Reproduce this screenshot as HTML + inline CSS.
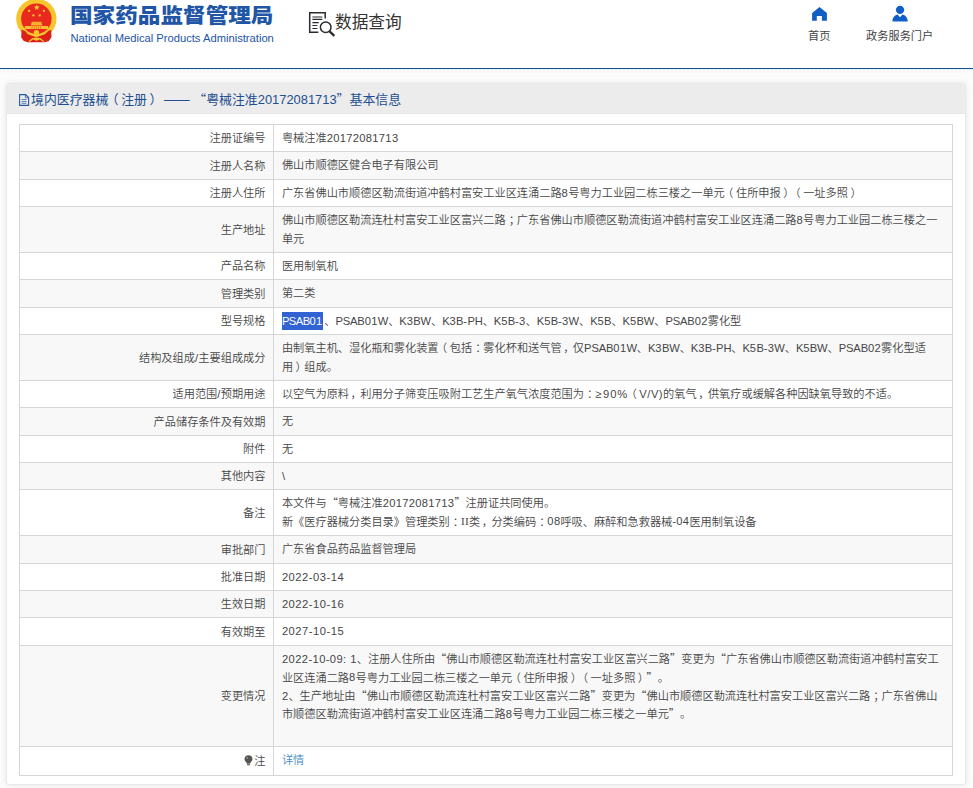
<!DOCTYPE html>
<html lang="zh-CN">
<head>
<meta charset="utf-8">
<title>数据查询</title>
<style>
*{box-sizing:border-box;}
html,body{margin:0;padding:0;}
body{width:973px;height:788px;overflow:hidden;background:#fcfcfc;font-family:"Liberation Sans","Noto Sans CJK SC",sans-serif;font-size:12px;color:#333;position:relative;}
.hdr{position:absolute;left:0;top:0;width:973px;height:68px;background:#fff;}
.hline{position:absolute;left:0;top:67.700px;width:973px;height:1.300px;background:#1d5187;border-bottom:0;box-shadow:0 1px 0 #e4f3fb;}
.stripe{position:absolute;left:0;top:70px;width:973px;height:3px;background:repeating-linear-gradient(135deg,#f2eeec 0,#f2eeec .9px,#fdfdfd .9px,#fdfdfd 2.83px);}
.emblem{position:absolute;left:14px;top:-2px;width:46px;height:48px;}
.t1{position:absolute;left:70.200px;top:1.300px;font-size:20.8px;line-height:30px;font-weight:900;color:#2155a5;white-space:nowrap;transform:scaleX(1.087);transform-origin:0 0;}
.t2{position:absolute;left:70.500px;top:31px;font-size:11.2px;line-height:14px;color:#1c55a5;white-space:nowrap;}
.sico{position:absolute;left:304px;top:8px;width:34px;height:30px;}
.stxt{position:absolute;left:335px;top:9.800px;font-size:16.7px;line-height:26px;color:#333;white-space:nowrap;}
.nav{position:absolute;text-align:center;font-size:11.2px;line-height:14px;color:#444;white-space:nowrap;}
.nav svg{display:block;margin:0 auto;}
.panel{position:absolute;left:6px;top:83px;width:960px;height:702px;background:#fff;border:1px solid #e9e9e9;border-radius:3px;box-shadow:0 0 6px rgba(0,0,0,.09);}
.phead{position:absolute;left:0;top:0;width:958px;height:30px;background:#ececec;border-bottom:1px solid #e6e6e6;border-radius:3px 3px 0 0;}
.ptitle{position:absolute;left:13px;top:6px;font-size:12.9px;line-height:20px;color:#1d4f91;white-space:nowrap;}
table{position:absolute;left:11.500px;top:40px;width:934.500px;border-collapse:collapse;table-layout:fixed;}
td{font-family:"Liberation Sans","Noto Sans CJK SC DemiLight","Noto Sans CJK SC",sans-serif;border:1px solid #d6d6d6;padding:4.3px 8px 2.9px 8.4px;font-size:11.2px;line-height:18.2px;text-spacing-trim:space-all;vertical-align:top;color:#464646;}
td.l{text-align:right;width:254px;padding:4px 7px 3.2px 8px;vertical-align:middle;}
tr:nth-child(even) td{background:#f8f8f8;}
a{color:#428bca;text-decoration:none;}
.q{font-family:"Noto Sans CJK SC DemiLight","Noto Sans CJK SC",sans-serif;line-height:0;}
.pl{position:relative;left:-2.500px;}
.pr{position:relative;left:2.500px;}
.pc{position:relative;left:3px;}
.e{position:relative;top:-.1px;letter-spacing:.3px;}
.u{letter-spacing:-.14px;}
.sel .u{letter-spacing:-.55px;}
.pm{position:relative;left:1.500px;}
.sel{background:#3163d3;color:#fff;padding:3.600px 0 2.700px;margin-right:1.600px;}
</style>
</head>
<body>
<div class="hdr">
  <svg class="emblem" viewBox="14 -2 46 48"><circle cx="36.35" cy="18.8" r="20.15" fill="#f6c42c"/><circle cx="36.35" cy="18.8" r="15.2" fill="#e9291d"/><path d="M21.5 29.7L25.2 31L27.8 34.300L35.7 36.9L37 36.9L44.9 34.300L48.2 31L51.2 29.7L51.5 36.9L48.9 40.9L44.9 42.2L27.8 42.2L23.8 40.9L21.2 37.6Z" fill="#dc2018"/><circle cx="36.4" cy="32.6" r="2.700" fill="#f6c42c"/><path d="M29 41.5L33 38.6L36.4 40L39.8 38.6L43.8 41.5" fill="none" stroke="#f6c42c" stroke-width="1.3"/><ellipse cx="36.4" cy="38.9" rx="2.600" ry="1.3" fill="#f6c42c"/><polygon points="36.8,4.300 37.55,6.500 39.9,6.500 38,7.900 38.7,10.1 36.8,8.800 34.9,10.1 35.6,7.900 33.7,6.500 36.050,6.500" fill="#f8cf3a"/><circle cx="29.1" cy="10.9" r="1.150" fill="#f8cf3a"/><circle cx="44" cy="10.9" r="1.150" fill="#f8cf3a"/><circle cx="33.4" cy="15.4" r="1.150" fill="#f8cf3a"/><circle cx="39.7" cy="15.4" r="1.150" fill="#f8cf3a"/><path d="M31.8 21.8h9.500l1 3.600h-11.500z" fill="#f9b02c"/><rect x="24.8" y="26" width="23.4" height="3" fill="#f8c030"/><path d="M32 26v3M34.2 26v3M36.4 26v3M38.6 26v3M40.8 26v3" stroke="#ee5a20" stroke-width=".6"/></svg>
  <div class="t1">国家药品监督管理局</div>
  <div class="t2">National Medical Products Administration</div>
  <svg class="sico" viewBox="304 8 34 30"><path d="M325.2 18.4V12.700H309.700V32.2H318.300" fill="none" stroke="#2a2a30" stroke-width="1.500"/><path d="M312.400 17H322.300M312.400 19.300H322.300M312.400 22.600H318.800M312.400 25.500H317.300M312.400 28.500H317.300" stroke="#2a2a30" stroke-width="1.150"/><circle cx="325.700" cy="27.300" r="5.300" fill="#fff" stroke="#2a2a30" stroke-width="1.500"/><path d="M329.600 31.400L334.300 35.800" stroke="#2a2a30" stroke-width="2.300"/></svg>
  <div class="stxt">数据查询</div>
  <svg style="position:absolute;left:810px;top:5px" width="20" height="18" viewBox="810 5 20 18"><path d="M819.500 6.900L826.900 12.900V20.700H821.900V16.100H816.800V20.700H812.100V12.900Z" fill="#105fc4"/></svg>
  <div class="nav" style="left:789.200px;width:60px;top:28.700px;">首页</div>
  <svg style="position:absolute;left:890px;top:4px" width="20" height="19" viewBox="890 4 20 19"><circle cx="900.050" cy="9.900" r="4.150" fill="#105fc4"/><path d="M892.400 21.400C892.600 17 895 15.200 897.600 14.500L900.050 17.300L902.500 14.500C905.100 15.200 907.500 17 907.800 21.400Z" fill="#105fc4"/></svg>
  <div class="nav" style="left:859.700px;width:80px;top:28.700px;">政务服务门户</div>
</div>
<div class="hline"></div>
<div class="stripe"></div>
<div class="panel">
  <div class="phead"><div class="ptitle"><svg width="11" height="12" viewBox="0 0 11 12" style="vertical-align:-1.500px;margin-left:-1px;margin-right:1px"><path d="M0.600 0.600h6l3 3v7.800h-9z" fill="none" stroke="#2a5a9c" stroke-width="1.100"/><path d="M6.400 0.800v3h3" fill="none" stroke="#2a5a9c" stroke-width=".8"/><path d="M2.500 5.500h5M2.500 7.500h5M2.500 9.300h5" stroke="#5c82b6" stroke-width="1"/></svg>境内医疗器械<span class="pl">（</span>注册<span class="pr">）</span><span style="margin-left:4px">——</span> <span class="q">“</span>粤械注准20172081713<span class="q">”</span>基本信息</div></div>
  <table>
    <tr style="height:27px"><td class="l">注册证编号</td><td>粤械注准<span class="e">20172081713</span></td></tr>
    <tr style="height:28px"><td class="l">注册人名称</td><td>佛山市顺德区健合电子有限公司</td></tr>
    <tr style="height:27px"><td class="l">注册人住所</td><td>广东省佛山市顺德区勒流街道冲鹤村富安工业区连涌二路<span class="e">8</span>号粤力工业园二栋三楼之一单元<span class="pl">（</span>住所申报<span class="pr">）</span><span class="pl">（</span>一址多照<span class="pr">）</span></td></tr>
    <tr style="height:46px"><td class="l">生产地址</td><td>佛山市顺德区勒流连杜村富安工业区富兴二路<span class="pc">；</span>广东省佛山市顺德区勒流街道冲鹤村富安工业区连涌二路<span class="e">8</span>号粤力工业园二栋三楼之一单元</td></tr>
    <tr style="height:27px"><td class="l">产品名称</td><td>医用制氧机</td></tr>
    <tr style="height:28px"><td class="l">管理类别</td><td>第二类</td></tr>
    <tr style="height:27px"><td class="l">型号规格</td><td><span class="sel"><span class="e"><span class="u">PSAB</span>01</span></span>、<span class="e"><span class="u">PSAB</span>01<span class="u">W</span></span>、<span class="e"><span class="u">K</span>3<span class="u">BW</span></span>、<span class="e"><span class="u">K</span>3<span class="u">B</span>-<span class="u">PH</span></span>、<span class="e"><span class="u">K</span>5<span class="u">B</span>-3</span>、<span class="e"><span class="u">K</span>5<span class="u">B</span>-3<span class="u">W</span></span>、<span class="e"><span class="u">K</span>5<span class="u">B</span></span>、<span class="e"><span class="u">K</span>5<span class="u">BW</span></span>、<span class="e"><span class="u">PSAB</span>02</span>雾化型</td></tr>
    <tr style="height:46px"><td class="l">结构及组成<span class="e">/</span>主要组成成分</td><td>由制氧主机、湿化瓶和雾化装置<span class="pl">（</span>包括<span class="pc">：</span>雾化杯和送气管<span class="pm">，</span>仅<span class="e"><span class="u">PSAB</span>01<span class="u">W</span></span>、<span class="e"><span class="u">K</span>3<span class="u">BW</span></span>、<span class="e"><span class="u">K</span>3<span class="u">B</span>-<span class="u">PH</span></span>、<span class="e"><span class="u">K</span>5<span class="u">B</span>-3<span class="u">W</span></span>、<span class="e"><span class="u">K</span>5<span class="u">BW</span></span>、<span class="e"><span class="u">PSAB</span>02</span>雾化型适用<span class="pr">）</span>组成。</td></tr>
    <tr style="height:27px"><td class="l">适用范围<span class="e">/</span>预期用途</td><td>以空气为原料<span class="pm">，</span>利用分子筛变压吸附工艺生产氧气浓度范围为<span class="pc">：</span><span style="margin-right:1.700px">≥</span><span class="e" style="letter-spacing:.9px">90%</span><span class="pl">（</span><span class="e" style="letter-spacing:.5px">V/V)</span>的氧气<span class="pm">，</span>供氧疗或缓解各种因缺氧导致的不适。</td></tr>
    <tr style="height:28px"><td class="l">产品储存条件及有效期</td><td>无</td></tr>
    <tr style="height:27px"><td class="l">附件</td><td>无</td></tr>
    <tr style="height:27px"><td class="l">其他内容</td><td><span class="e">\</span></td></tr>
    <tr style="height:46px"><td class="l">备注</td><td>本文件与<span class="q">“</span>粤械注准<span class="e">20172081713</span><span class="q">”</span>注册证共同使用。<br>新《医疗器械分类目录》管理类别<span class="pc">：</span><span class="e" style="font-family:'Liberation Serif',serif;line-height:0">II</span>类<span class="pm">，</span>分类编码<span class="pc">：</span><span class="e">08</span>呼吸、麻醉和急救器械<span class="e">-04</span>医用制氧设备</td></tr>
    <tr style="height:28px"><td class="l">审批部门</td><td>广东省食品药品监督管理局</td></tr>
    <tr style="height:27px"><td class="l">批准日期</td><td><span class="e" style="letter-spacing:.5px">2022-03-14</span></td></tr>
    <tr style="height:27px"><td class="l">生效日期</td><td><span class="e" style="letter-spacing:.5px">2022-10-16</span></td></tr>
    <tr style="height:28px"><td class="l">有效期至</td><td><span class="e" style="letter-spacing:.5px">2027-10-15</span></td></tr>
    <tr style="height:101px"><td class="l">变更情况</td><td><span class="e" style="letter-spacing:.4px">2022-10-09: 1</span>、注册人住所由<span class="q">“</span>佛山市顺德区勒流连杜村富安工业区富兴二路<span class="q">”</span>变更为<span class="q">“</span>广东省佛山市顺德区勒流街道冲鹤村富安工业区连涌二路<span class="e">8</span>号粤力工业园二栋三楼之一单元<span class="pl">（</span>住所申报<span class="pr">）</span><span class="pl">（</span>一址多照<span class="pr">）</span><span class="q">”</span>。<br><span class="e">2</span>、生产地址由<span class="q">“</span>佛山市顺德区勒流连杜村富安工业区富兴二路<span class="q">”</span>变更为<span class="q">“</span>佛山市顺德区勒流连杜村富安工业区富兴二路<span class="pc">；</span>广东省佛山市顺德区勒流街道冲鹤村富安工业区连涌二路<span class="e">8</span>号粤力工业园二栋三楼之一单元<span class="q">”</span>。<br><br></td></tr>
    <tr style="height:29px"><td class="l"><svg width="9" height="11" viewBox="0 0 9 11" style="vertical-align:-1px;margin-right:1.500px"><path d="M4.500 0.300C2.200 0.300 0.500 2 0.500 4.100C0.500 5.500 1.300 6.500 2.200 7.300C2.700 7.800 2.800 8.200 2.800 8.700H6.200C6.200 8.200 6.300 7.800 6.800 7.300C7.700 6.500 8.500 5.500 8.500 4.100C8.500 2 6.800 0.300 4.500 0.300Z" fill="#555"/><path d="M3 9.200H6V10.300H3Z" fill="#555"/><circle cx="3.200" cy="2.800" r="0.900" fill="#999"/></svg>注</td><td><a>详情</a></td></tr>
  </table>
</div>
</body>
</html>
